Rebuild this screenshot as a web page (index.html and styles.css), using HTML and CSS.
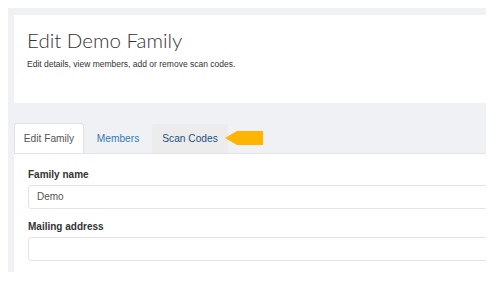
FILE: index.html
```html
<!DOCTYPE html>
<html>
<head>
<meta charset="utf-8">
<link rel="stylesheet" href="styles.css">
</head>
<body>
<div class="page">
  <header class="head">
    <h1 class="title">Edit Demo Family</h1>
    <p class="sub">Edit details, view members, add or remove scan codes.</p>
  </header>
  <nav class="tabs">
    <a class="tab tab-active">Edit Family</a>
    <a class="tab tab-link">Members</a>
    <a class="tab tab-hover">Scan Codes</a>
    <svg class="arrow" width="38" height="14" viewBox="0 0 38 14"><polygon points="0,7 12,0 38,0 38,14 12,14" fill="#ffb400"/></svg>
  </nav>
  <section class="content">
    <div class="field">
      <label class="label">Family name</label>
      <div class="input">Demo</div>
    </div>
    <div class="field">
      <label class="label">Mailing address</label>
      <div class="input"></div>
    </div>
  </section>
</div>
</body>
</html>
```
FILE: styles.css
```css
html, body { margin: 0; padding: 0; background: #fff; }
body { font-family: "Liberation Sans", Arial, sans-serif; }
.page {
  margin: 8px 14px 0 8px;
  height: 264px;
  box-sizing: border-box;
  padding: 7px 0 0 6px;
  background: #f0f1f5;
  overflow: hidden;
  display: flex;
  flex-direction: column;
}
.head {
  background: #fff;
  height: 88px;
  flex: none;
  padding: 0 0 0 13px;
  box-sizing: border-box;
}
.title {
  margin: 0;
  padding-top: 15px;
  font-family: Lato, "Liberation Sans", sans-serif;
  font-weight: 300;
  font-size: 20.5px;
  line-height: 20px;
  color: #333;
}
.sub {
  margin: 9px 0 0;
  font-size: 8.5px;
  line-height: 10px;
  color: #333;
}
.tabs {
  flex: none;
  display: flex;
  align-items: center;
  margin-top: 20px;
  height: 30px;
  border-bottom: 1px solid #e4e5e8;
}
.tab {
  box-sizing: border-box;
  height: 29px;
  align-self: flex-end;
  display: flex;
  align-items: center;
  justify-content: center;
  font-size: 10.2px;
  text-decoration: none;
}
.tab-active {
  width: 70px;
  background: #fff;
  border: 1px solid #e2e2e4;
  border-bottom: none;
  border-radius: 3px 3px 0 0;
  color: #555;
  height: 30px;
  margin-bottom: -1px;
  align-self: flex-start;
}
.tab-link {
  width: 68px;
  color: #337ab7;
}
.tab-hover {
  width: 76px;
  background: #ececec;
  color: #23527c;
  border-radius: 3px 3px 0 0;
}
.arrow { margin-left: -3px; }
.content {
  flex: 1;
  background: #fff;
  padding: 15px 0 0 14px;
}
.field { margin-bottom: 12px; }
.label {
  display: block;
  font-weight: bold;
  font-size: 10px;
  line-height: 12px;
  color: #333;
  margin-bottom: 4px;
}
.input {
  box-sizing: border-box;
  width: 480px;
  height: 24px;
  border: 1px solid #e4e4e6;
  border-radius: 3px;
  padding: 0 8px;
  font-size: 10px;
  line-height: 22px;
  color: #555;
}
```
